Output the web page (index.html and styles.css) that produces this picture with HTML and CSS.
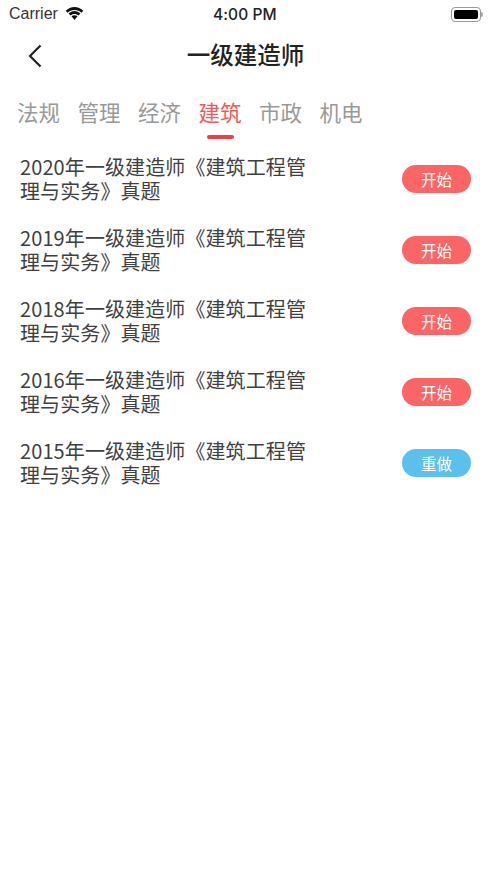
FILE: index.html
```html
<!DOCTYPE html>
<html lang="zh">
<head>
<meta charset="utf-8">
<title>一级建造师</title>
<link rel="stylesheet" href="styles.css">
</head>
<body>
<div class="status">
  <div class="status-left">
    <span class="carrier">Carrier</span>
    <svg class="wifi" width="19" height="14" viewBox="0 0 19 14"><path d="M9.500 3c2.600 0 5 1 6.900 2.700L18.300 3.700C15.900 1.400 12.800 0 9.500 0S3.100 1.400.7 3.700l1.900 2C4.500 4 6.900 3 9.500 3z"/><path d="M9.500 7c1.500 0 2.900.6 4 1.500l1.900-2C13.800 5 11.800 4 9.500 4S5.200 5 3.600 6.500l1.900 2c1.100-.9 2.500-1.500 4-1.500z"/><path d="M9.500 8.200c-1.100 0-2.200.4-3 1.100l3 3.700 3-3.700c-.8-.7-1.900-1.100-3-1.100z"/></svg>
  </div>
  <span class="time">4:00 PM</span>
  <div class="battery"><span class="battery-fill"></span></div>
</div>
<header class="nav">
  <svg class="back" width="14" height="24" viewBox="0 0 14 24"><path d="M12.500 1.500 2 12l10.500 10.500" fill="none" stroke="#222" stroke-width="2.200"/></svg>
  <h1 class="title">一级建造师</h1>
</header>
<nav class="tabs">
  <span class="tab">法规</span>
  <span class="tab">管理</span>
  <span class="tab">经济</span>
  <span class="tab active">建筑</span>
  <span class="tab">市政</span>
  <span class="tab">机电</span>
</nav>
<main class="list">
  <div class="row"><p class="name">2020年一级建造师《建筑工程管理与实务》真题</p><span class="btn">开始</span></div>
  <div class="row"><p class="name">2019年一级建造师《建筑工程管理与实务》真题</p><span class="btn">开始</span></div>
  <div class="row"><p class="name">2018年一级建造师《建筑工程管理与实务》真题</p><span class="btn">开始</span></div>
  <div class="row"><p class="name">2016年一级建造师《建筑工程管理与实务》真题</p><span class="btn">开始</span></div>
  <div class="row"><p class="name">2015年一级建造师《建筑工程管理与实务》真题</p><span class="btn redo">重做</span></div>
</main>
</body>
</html>
```
FILE: styles.css
```css
* { box-sizing: border-box; }
html, body { margin: 0; padding: 0; }
body {
  width: 491px;
  height: 877px;
  background: #fff;
  font-family: "Noto Sans CJK SC", "Noto Sans", sans-serif;
  overflow: hidden;
}
.status {
  height: 28px;
  padding: 0 10px 0 9px;
  display: flex;
  align-items: center;
  justify-content: space-between;
  position: relative;
  color: #222;
}
.status-left { display: flex; align-items: center; gap: 7px; }
.carrier { font: 16px "Liberation Sans", sans-serif; color: #333; }
.wifi { fill: #111; }
.time {
  position: absolute;
  left: 213px;
  font: 500 15.500px Inter, "Liberation Sans", sans-serif;
  letter-spacing: .1px;
  color: #222;
}
.battery {
  width: 30px;
  height: 15px;
  border: 1px solid #999;
  border-radius: 4px;
  padding: 2px;
  display: flex;
  position: relative;
}
.battery::after {
  content: "";
  position: absolute;
  right: -3px;
  top: 4px;
  width: 2px;
  height: 5px;
  border-radius: 0 2px 2px 0;
  background: #aaa;
}
.battery-fill { flex: 1; background: #000; border-radius: 2px; }
.nav {
  height: 54px;
  display: flex;
  align-items: center;
  justify-content: center;
  position: relative;
}
.back { position: absolute; left: 28px; top: 16px; }
.title {
  margin: 0;
  font-size: 23.500px;
  font-weight: 500;
  color: #222;
  line-height: 1;
}
.tabs {
  display: flex;
  gap: 17.500px;
  padding: 14px 0 0 17px;
  height: 60px;
}
.tab {
  font-size: 21.500px;
  line-height: 32px;
  color: #999;
  position: relative;
  height: 32px;
}
.tab.active { color: #f25a5a; }
.tab.active::after {
  content: "";
  position: absolute;
  left: 8px;
  right: 8px;
  top: 39px;
  height: 4px;
  border-radius: 2px;
  background: #ee4040;
}
.list { padding: 0 20px; margin-top: 2px; }
.row {
  display: flex;
  justify-content: space-between;
  align-items: center;
  height: 71px;
  padding-bottom: 1px;
}
.name {
  margin: 0 0 1px;
  width: 292px;
  font-size: 20px;
  letter-spacing: .1px;
  line-height: 23.500px;
  color: #3f3f3f;
}
.btn {
  width: 69px;
  height: 28px;
  border-radius: 14px;
  background: #fb6565;
  color: #fff;
  font-size: 15.500px;
  line-height: 28px;
  text-align: center;
}
.btn.redo { background: #5cc0ec; }
```
